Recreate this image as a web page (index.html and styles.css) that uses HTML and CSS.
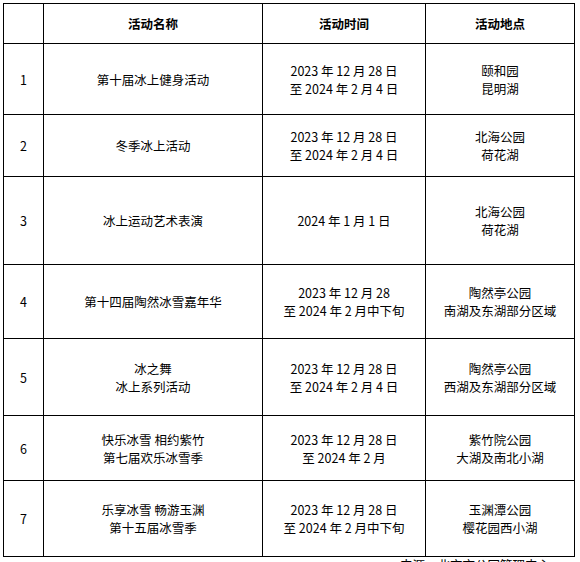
FILE: index.html
```html
<!DOCTYPE html>
<html lang="zh-CN">
<head>
<meta charset="utf-8">
<title>活动列表</title>
<link rel="stylesheet" href="styles.css">
</head>
<body>
<div class="page">
  <div class="grid">
    <div class="cell hd"></div>
    <div class="cell hd">活动名称</div>
    <div class="cell hd">活动时间</div>
    <div class="cell hd">活动地点</div>

    <div class="cell r1">1</div>
    <div class="cell r1">第十届冰上健身活动</div>
    <div class="cell r1">2023 年 12 月 28 日<br>至 2024 年 2 月 4 日</div>
    <div class="cell r1">颐和园<br>昆明湖</div>

    <div class="cell r2">2</div>
    <div class="cell r2">冬季冰上活动</div>
    <div class="cell r2">2023 年 12 月 28 日<br>至 2024 年 2 月 4 日</div>
    <div class="cell r2">北海公园<br>荷花湖</div>

    <div class="cell r3">3</div>
    <div class="cell r3">冰上运动艺术表演</div>
    <div class="cell r3">2024 年 1 月 1 日</div>
    <div class="cell r3">北海公园<br>荷花湖</div>

    <div class="cell r4">4</div>
    <div class="cell r4">第十四届陶然冰雪嘉年华</div>
    <div class="cell r4">2023 年 12 月 28<br>至 2024 年 2 月中下旬</div>
    <div class="cell r4">陶然亭公园<br>南湖及东湖部分区域</div>

    <div class="cell r5">5</div>
    <div class="cell r5">冰之舞<br>冰上系列活动</div>
    <div class="cell r5">2023 年 12 月 28 日<br>至 2024 年 2 月 4 日</div>
    <div class="cell r5">陶然亭公园<br>西湖及东湖部分区域</div>

    <div class="cell r6">6</div>
    <div class="cell r6">快乐冰雪 相约紫竹<br>第七届欢乐冰雪季</div>
    <div class="cell r6">2023 年 12 月 28 日<br>至 2024 年 2 月</div>
    <div class="cell r6">紫竹院公园<br>大湖及南北小湖</div>

    <div class="cell r7">7</div>
    <div class="cell r7">乐享冰雪 畅游玉渊<br>第十五届冰雪季</div>
    <div class="cell r7">2023 年 12 月 28 日<br>至 2024 年 2 月中下旬</div>
    <div class="cell r7">玉渊潭公园<br>樱花园西小湖</div>
  </div>
  <p class="note">来源：北京市公园管理中心</p>
</div>
</body>
</html>
```
FILE: styles.css
```css
html, body {
  margin: 0;
  padding: 0;
  background: #ffffff;
}
body {
  font-family: "Noto Sans CJK SC", "Liberation Sans", sans-serif;
  font-size: 12.5px;
  color: #000;
  overflow: hidden;
}
.page {
  padding: 3px 0 0 3px;
}
.grid {
  display: grid;
  width: 570px;
  grid-template-columns: 39px 218px 162px 148px;
  grid-template-rows: 39px 70px 61px 87px 73px 76px 64px 75px;
  gap: 1px;
  padding: 1px;
  background: #000;
}
.cell {
  background: #fff;
  display: flex;
  align-items: center;
  justify-content: center;
  text-align: center;
  line-height: 18px;
  padding-top: 1px;
  box-sizing: border-box;
}
.hd {
  font-weight: bold;
}
.note {
  margin: 1px 0 0 397px;
  line-height: 14px;
  white-space: nowrap;
}
```
